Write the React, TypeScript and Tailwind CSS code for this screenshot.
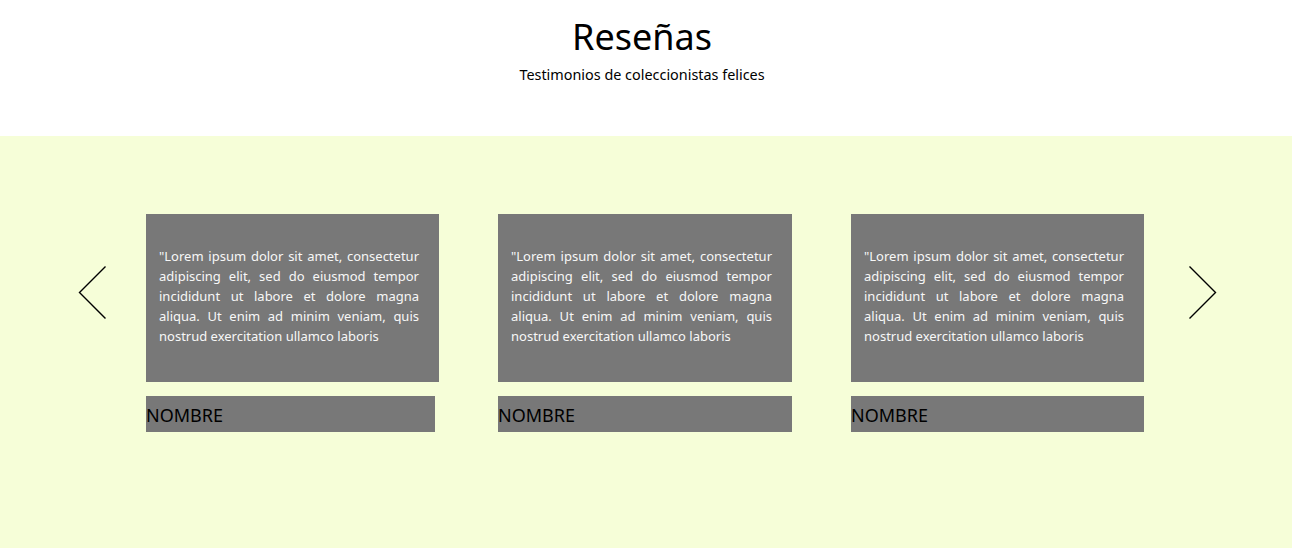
const quote =
  '"Lorem ipsum dolor sit amet, consectetur adipiscing elit, sed do eiusmod tempor incididunt ut labore et dolore magna aliqua. Ut enim ad minim veniam, quis nostrud exercitation ullamco laboris'

const reviews = [
  { quote, name: "NOMBRE", width: "w-[293px]", nameWidth: "w-[289px]" },
  { quote, name: "NOMBRE", width: "w-[294px]", nameWidth: "w-[294px]" },
  { quote, name: "NOMBRE", width: "w-[293px]", nameWidth: "w-[293px]" },
]

function Chevron({ dir }: { dir: "left" | "right" }) {
  return (
    <svg width="29" height="55" viewBox="0 0 29 55" className="mt-[51px] shrink-0">
      <path
        d={dir === "left" ? "M27.5 1.5 L1.5 27.5 L27.5 53.5" : "M1.5 1.5 L27.5 27.5 L1.5 53.5"}
        fill="none"
        stroke="#000"
        strokeWidth="1.4"
      />
    </svg>
  )
}

export default function App() {
  return (
    <div className="min-h-[548px] bg-white font-['Noto_Sans',sans-serif]">
      <header className="flex h-[136px] flex-col items-center pr-[8px] pt-[12px] text-black">
        <h1 className="text-[36px] leading-[50px]">Reseñas</h1>
        <p className="mt-[3px] text-[14.4px] leading-[20px]">Testimonios de coleccionistas felices</p>
      </header>

      <section className="h-[412px] bg-[#f6fed8] pt-[78px]">
        <div className="ml-[78px] flex items-start">
          <Chevron dir="left" />
          <div className="ml-[39px] mr-[44px] flex gap-[59px]">
            {reviews.map((r, i) => (
              <div key={i} className={r.width}>
                <div className="h-[168px] bg-[#787878] pl-[13px] pr-[20px] pt-[32px]">
                  <p className="text-justify text-[13px] leading-[20px] text-[#f7f7f7]">{r.quote}</p>
                </div>
                <div className={`mt-[14px] h-[36px] bg-[#787878] text-[18px] leading-[38px] text-black ${r.nameWidth}`}>
                  {r.name}
                </div>
              </div>
            ))}
          </div>
          <Chevron dir="right" />
        </div>
      </section>
    </div>
  )
}
